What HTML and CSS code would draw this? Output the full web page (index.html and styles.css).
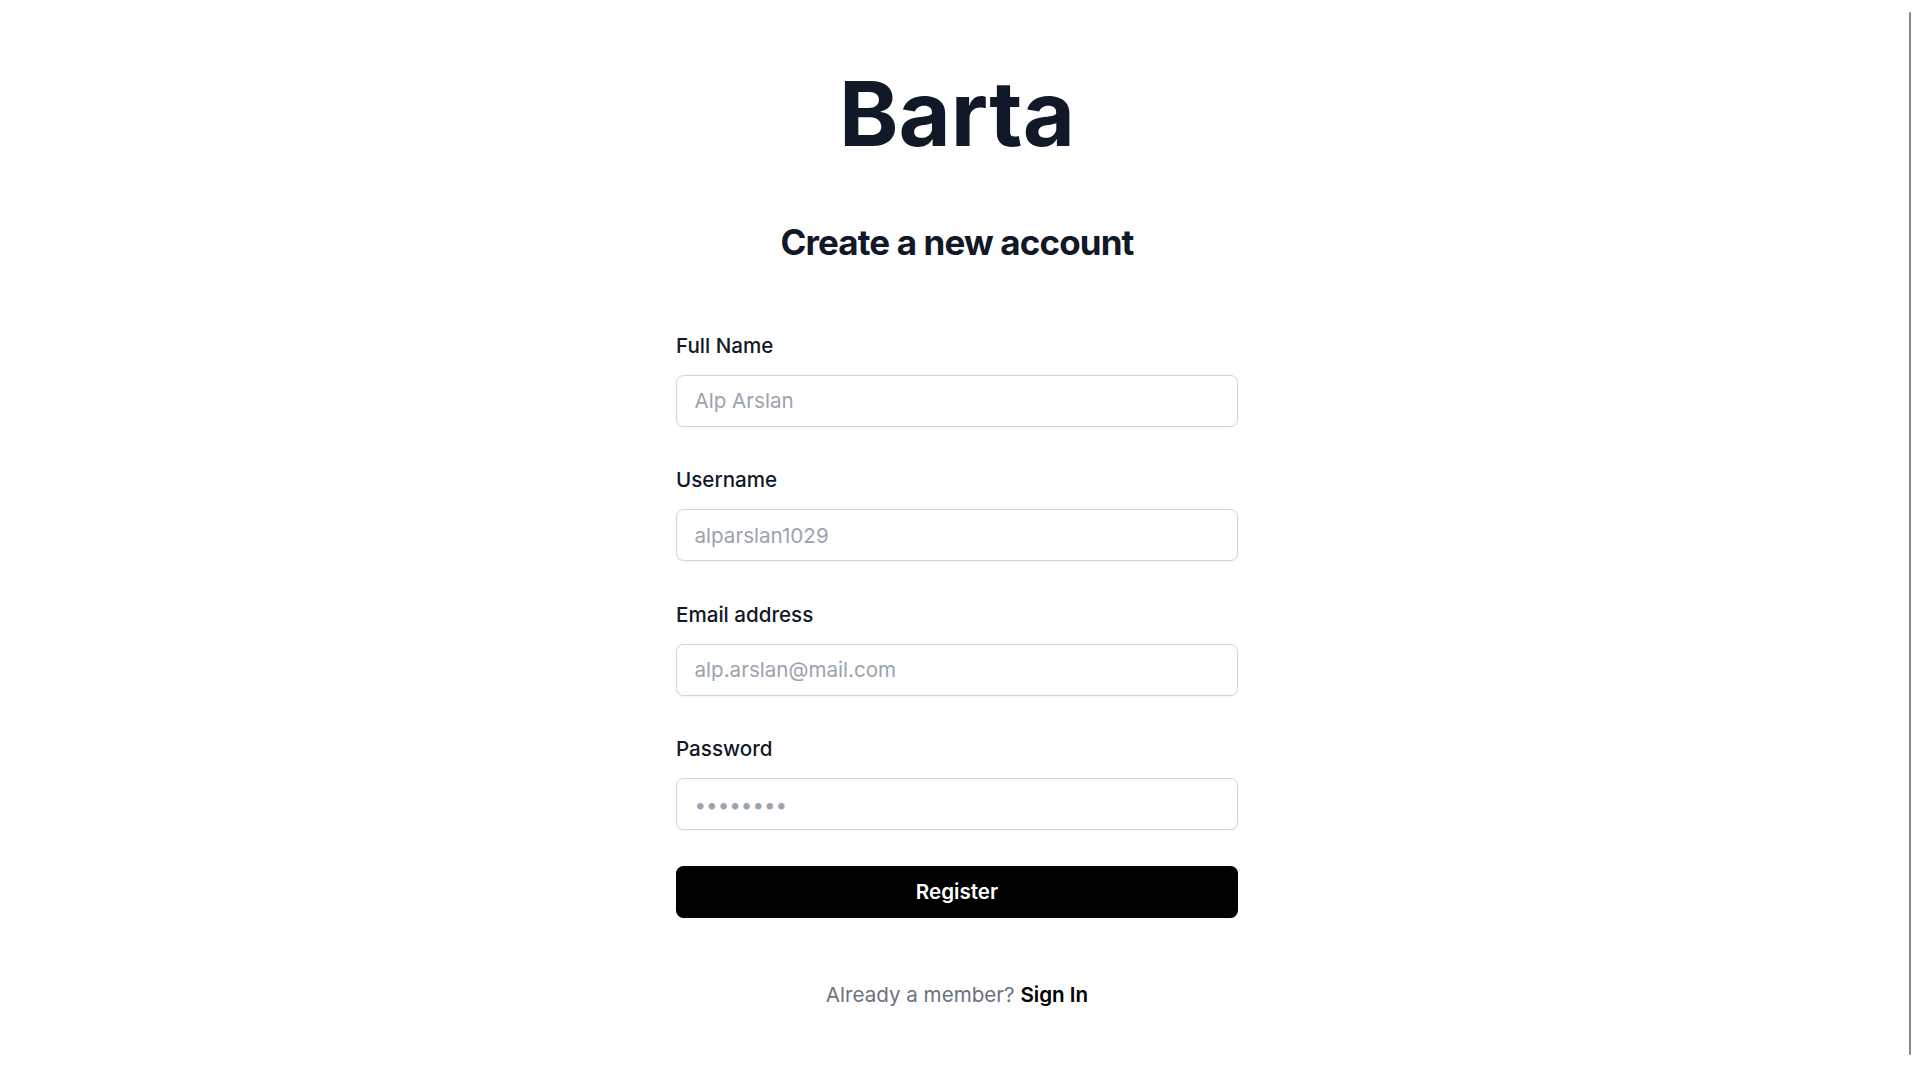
FILE: index.html
```html
<!DOCTYPE html>
<html lang="en">
<head>
<meta charset="utf-8">
<title>Barta - Register</title>
<link rel="stylesheet" href="styles.css">
</head>
<body>
<div class="page">
  <div class="head">
    <h1 class="brand">Barta</h1>
    <h2 class="title">Create a new account</h2>
  </div>
  <form class="form">
    <div class="field">
      <label class="label" for="name">Full Name</label>
      <input class="input" id="name" type="text" placeholder="Alp Arslan">
    </div>
    <div class="field">
      <label class="label" for="username">Username</label>
      <input class="input" id="username" type="text" placeholder="alparslan1029">
    </div>
    <div class="field">
      <label class="label" for="email">Email address</label>
      <input class="input" id="email" type="email" placeholder="alp.arslan@mail.com">
    </div>
    <div class="field">
      <label class="label" for="password">Password</label>
      <input class="input" id="password" type="password" placeholder="••••••••">
    </div>
    <button class="btn" type="button">Register</button>
  </form>
  <p class="signin">Already a member? <a class="signin-link" href="#">Sign In</a></p>
</div>
<div class="scrollthumb"></div>
</body>
</html>
```
FILE: styles.css
```css
* { box-sizing: border-box; }
html, body { margin: 0; padding: 0; background: #ffffff; }
body {
  font-family: Inter, "Noto Sans", "Liberation Sans", sans-serif;
  color: #111827;
  overflow: hidden;
}
.page {
  padding-right: 6px;
  padding-top: 69px;
  display: flex;
  flex-direction: column;
  align-items: center;
}
.head {
  display: flex;
  flex-direction: column;
  align-items: center;
}
.brand {
  margin: 0;
  font-size: 90px;
  line-height: 90px;
  font-weight: 700;
  color: #111827;
  letter-spacing: 0;
}
.title {
  margin: 60.6px 0 0;
  font-size: 35px;
  line-height: 45px;
  font-weight: 700;
  letter-spacing: -0.025em;
  color: #111827;
}
.form {
  width: 562px;
  margin-top: 65.4px;
  display: flex;
  flex-direction: column;
  gap: 37.5px;
}
.field {
  display: flex;
  flex-direction: column;
  gap: 14px;
}
.label {
  padding-top: 1px;
  font-size: 20.6px;
  line-height: 30px;
  font-weight: 500;
  color: #111827;
}
.input {
  display: block;
  width: 100%;
  height: 52px;
  padding: 10px 17.5px;
  border: 1px solid #d1d5db;
  border-radius: 7.5px;
  box-shadow: 0 1px 2px rgba(0,0,0,0.05);
  font-family: inherit;
  font-size: 20.6px;
  line-height: 30px;
  color: #111827;
  background: #fff;
  outline: none;
}
.input::placeholder { color: #9ca3af; opacity: 1; }
.btn {
  margin-top: -2px;
  height: 52px;
  width: 100%;
  border: 0;
  border-radius: 7.5px;
  background: #000;
  color: #fff;
  font-family: inherit;
  font-size: 20.6px;
  line-height: 30px;
  font-weight: 600;
  box-shadow: 0 1px 2px rgba(0,0,0,0.05);
}
.signin {
  margin: 62px 0 0;
  font-size: 20.6px;
  line-height: 30px;
  color: #6b7280;
  text-align: center;
}
.signin-link {
  color: #000;
  font-weight: 600;
  text-decoration: none;
}
.scrollthumb {
  position: fixed;
  left: 1909px;
  top: 12px;
  width: 2px;
  height: 1043px;
  background: #888888;
  border-radius: 1px;
}
```
